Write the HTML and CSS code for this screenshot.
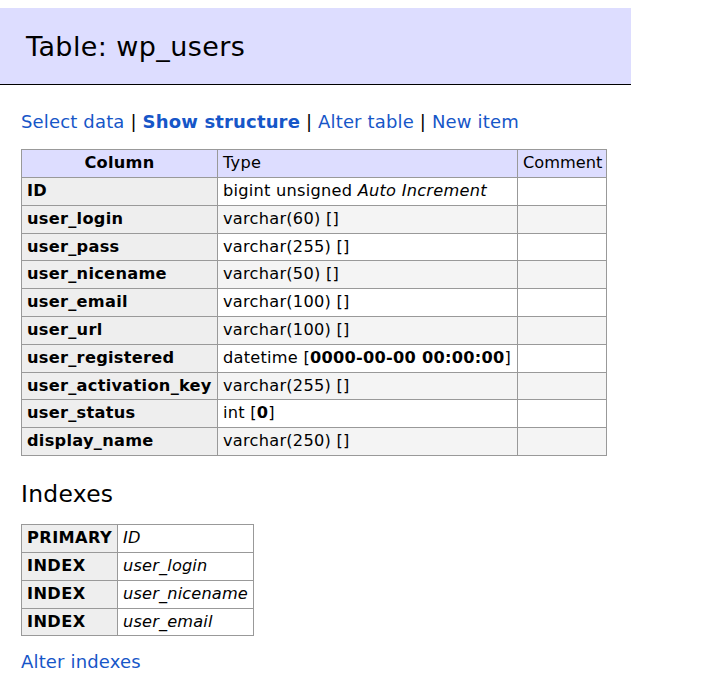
FILE: index.html
```html
<!DOCTYPE html>
<html>
<head>
<meta charset="utf-8">
<title>Table: wp_users</title>
<link rel="stylesheet" href="styles.css">
</head>
<body>
<div class="page">
  <h2 class="title">Table: wp_users</h2>
  <div class="content">
    <p class="links"><a href="#">Select data</a> | <a href="#" class="active">Show structure</a> | <a href="#">Alter table</a> | <a href="#">New item</a></p>
    <table class="grid structure">
      <thead>
        <tr><th class="col-name">Column</th><td class="col-type">Type</td><td class="col-comment">Comment</td></tr>
      </thead>
      <tbody>
        <tr><th>ID</th><td>bigint unsigned <i>Auto Increment</i></td><td></td></tr>
        <tr class="odd"><th>user_login</th><td>varchar(60) []</td><td></td></tr>
        <tr><th>user_pass</th><td>varchar(255) []</td><td></td></tr>
        <tr class="odd"><th>user_nicename</th><td>varchar(50) []</td><td></td></tr>
        <tr><th>user_email</th><td>varchar(100) []</td><td></td></tr>
        <tr class="odd"><th>user_url</th><td>varchar(100) []</td><td></td></tr>
        <tr><th>user_registered</th><td>datetime [<b>0000-00-00 00:00:00</b>]</td><td></td></tr>
        <tr class="odd"><th>user_activation_key</th><td>varchar(255) []</td><td></td></tr>
        <tr><th>user_status</th><td>int [<b>0</b>]</td><td></td></tr>
        <tr class="odd"><th>display_name</th><td>varchar(250) []</td><td></td></tr>
      </tbody>
    </table>
    <h3 class="section">Indexes</h3>
    <table class="grid indexes">
      <tbody>
        <tr><th>PRIMARY</th><td><i>ID</i></td></tr>
        <tr><th>INDEX</th><td><i>user_login</i></td></tr>
        <tr><th>INDEX</th><td><i>user_nicename</i></td></tr>
        <tr><th>INDEX</th><td><i>user_email</i></td></tr>
      </tbody>
    </table>
    <p class="links bottom"><a href="#">Alter indexes</a></p>
  </div>
</div>
</body>
</html>
```
FILE: styles.css
```css
html, body {
  margin: 0;
  padding: 0;
  background: #fff;
}
body {
  color: #000;
  font-family: "DejaVu Sans", Verdana, sans-serif;
  font-size: 18px;
  line-height: 1.25;
}
.page {
  width: 631px;
  padding-top: 8px;
}
a {
  color: #1656c8;
  text-decoration: none;
}
a.active {
  font-weight: bold;
}
.title {
  font-size: 27px;
  font-weight: normal;
  letter-spacing: 0.4px;
  margin: 0;
  padding: 22px 26px 20px;
  border-bottom: 1px solid #000;
  background: #ddf;
  line-height: 1.25;
}
.content {
  padding-left: 21px;
}
.links {
  margin: 26px 0 0;
  letter-spacing: 0.16px;
}
.links.bottom {
  margin-top: 15px;
}
.grid {
  border-collapse: collapse;
  font-size: 16.2px;
  line-height: 20.8px;
  letter-spacing: 0.25px;
  margin-top: 16px;
}
.grid th, .grid td {
  border: 1px solid #999;
  padding: 3px 5px;
  text-align: left;
  white-space: nowrap;
}
.grid th {
  background: #eee;
  letter-spacing: 0.28px;
}
.grid tbody td {
  background: #fff;
}
.grid tbody tr.odd td {
  background: #f4f4f4;
}
.grid thead th, .grid thead td {
  background: #ddf;
  font-weight: normal;
}
.grid thead th {
  font-weight: bold;
  text-align: center;
}
.structure .col-name { width: 185px; }
.structure .col-type { width: 289px; }
.structure .col-comment {
  width: 76px;
  letter-spacing: 0;
  padding-right: 4px;
}
.indexes th {
  letter-spacing: 0.4px;
}
.indexes td {
  letter-spacing: 0.15px;
}
.section {
  font-size: 23.4px;
  font-weight: normal;
  letter-spacing: 0.3px;
  margin: 24px 0 0;
}
.indexes {
  margin-top: 15px;
}
```
